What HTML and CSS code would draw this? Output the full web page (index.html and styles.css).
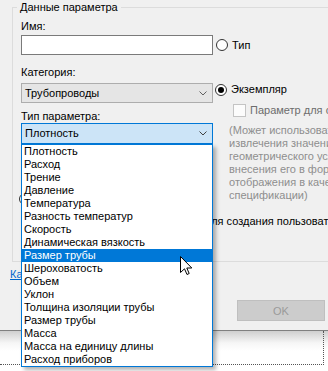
FILE: index.html
```html
<!DOCTYPE html>
<html lang="ru">

<head>
    <meta charset="UTF-8">
    <meta name="viewport" content="width=device-width, initial-scale=1.0">
    <title>Свойства параметра</title>
    <link rel="stylesheet" href="styles.css">
</head>

<body>
    <div class="dialog">
        <fieldset class="group">
            <legend>Данные параметра</legend>

            <div class="field-label">Имя:</div>
            <div class="name-row">
                <input class="textbox" type="text">
                <label class="radio radio-type"><span class="radio-circle"></span>Тип</label>
            </div>

            <div class="field-label cat-label">Категория:</div>
            <div class="main-row">
                <div class="left-col">
                    <div class="combo">
                        <span>Трубопроводы</span>
                        <svg class="chevron" width="8" height="5" viewBox="0 0 8 5"><polyline points="0.5,0.5 4,4 7.5,0.5" fill="none" stroke="#606060" stroke-width="1"/></svg>
                    </div>
                    <div class="field-label type-label">Тип параметра:</div>
                    <div class="combo combo-focus">
                        <span>Плотность</span>
                        <svg class="chevron" width="8" height="5" viewBox="0 0 8 5"><polyline points="0.5,0.5 4,4 7.5,0.5" fill="none" stroke="#404040" stroke-width="1"/></svg>
                    </div>
                    <label class="radio group-radio"><span class="radio-circle"></span>Общий</label>
                </div>
                <div class="right-col">
                    <label class="radio"><span class="radio-circle checked"></span>Экземпляр</label>
                    <label class="check-row"><span class="checkbox"></span>Параметр для отчетов</label>
                    <div class="note">
                        (Может использоваться для<br>
                        извлечения значения из<br>
                        геометрического условия и<br>
                        внесения его в формулу или для<br>
                        отображения в качестве параметра<br>
                        спецификации)
                    </div>
                </div>
            </div>

            <label class="extra-row"><span class="checkbox plain"></span>Использовать текущее значение для создания пользовательских параметров</label>
        </fieldset>

        <div class="link-row"><a href="#">Как работают параметры проекта?</a></div>

        <div class="button-row">
            <button class="ok-btn" disabled>OK</button>
        </div>
    </div>

    <div class="below">
        <div class="focus-rect"></div>
    </div>

    <!-- раскрытый список "Тип параметра" -->
    <ul class="dropdown">
        <li>Плотность</li>
        <li>Расход</li>
        <li>Трение</li>
        <li>Давление</li>
        <li>Температура</li>
        <li>Разность температур</li>
        <li>Скорость</li>
        <li>Динамическая вязкость</li>
        <li class="selected">Размер трубы</li>
        <li>Шероховатость</li>
        <li>Объем</li>
        <li>Уклон</li>
        <li>Толщина изоляции трубы</li>
        <li>Размер трубы</li>
        <li>Масса</li>
        <li>Масса на единицу длины</li>
        <li>Расход приборов</li>
    </ul>

    <svg class="cursor" width="13" height="20" viewBox="0 0 13 20">
        <path d="M0.5 0.5 L0.5 16.5 L4.5 12.8 L7 18.5 L9.2 17.5 L6.8 12 L11.8 12 Z" fill="#fff" stroke="#000" stroke-width="1" stroke-linejoin="miter"/>
    </svg>
</body>

</html>
```

FILE: styles.css
```css
body {
    margin: 0;
    width: 328px;
    height: 371px;
    overflow: hidden;
    position: relative;
    background-color: #f0f0f0;
    font-family: "Liberation Sans", Arial, sans-serif;
    font-size: 11px;
    line-height: 13px;
    color: #000;
}

.dialog {
    height: 330px;
    border-bottom: 1px solid #808080;
    overflow: hidden;
}

.group {
    margin: 1px 0 0 12px;
    padding: 6px 0 0 8px;
    border: 1px solid #dcdcdc;
    width: 400px;
    height: 261px;
    box-sizing: border-box;
    min-inline-size: 0;
}

.group legend {
    margin-left: -4px;
    padding: 0 3px;
    line-height: 13px;
}

.field-label {
    height: 13px;
    white-space: nowrap;
}

.name-row {
    display: flex;
    align-items: center;
    margin-top: 2px;
}

.textbox {
    width: 192px;
    height: 20px;
    margin: 0;
    padding: 0;
    box-sizing: border-box;
    border: 1px solid #7a7a7a;
    background-color: #fff;
    flex: none;
}

.radio {
    display: flex;
    align-items: center;
    gap: 4px;
    white-space: nowrap;
    height: 13px;
}

.radio-type {
    margin-left: 3px;
}

.radio-circle {
    width: 12px;
    height: 12px;
    box-sizing: border-box;
    border: 1px solid #333;
    border-radius: 50%;
    background-color: #fff;
    flex: none;
    display: flex;
    align-items: center;
    justify-content: center;
}

.radio-circle.checked::after {
    content: "";
    width: 6px;
    height: 6px;
    border-radius: 50%;
    background-color: #000;
}

.cat-label {
    margin-top: 11px;
}

.main-row {
    display: flex;
    align-items: flex-start;
    margin-top: 4px;
}

.left-col {
    width: 192px;
    flex: none;
}

.combo {
    height: 20px;
    box-sizing: border-box;
    border: 1px solid #adadad;
    background-color: #e5e5e5;
    display: flex;
    align-items: center;
    justify-content: space-between;
    padding: 0 5px 0 3px;
}

.combo-focus {
    height: 21px;
    border-color: #0078d7;
    background-color: #cce4f7;
}

.chevron {
    flex: none;
}

.type-label {
    margin-top: 7px;
}

.group-radio {
    margin: 48px 0 0 -2px;
}

.right-col {
    margin-left: 2px;
    white-space: nowrap;
}

.check-row {
    display: flex;
    align-items: center;
    gap: 4px;
    margin: 8px 0 0 18px;
    color: #6d6d6d;
}

.checkbox {
    width: 13px;
    height: 13px;
    box-sizing: border-box;
    border: 1px solid #c4c4c4;
    background-color: #fcfcfc;
    flex: none;
}

.checkbox.plain {
    border-color: #333;
    background-color: #fff;
}

.note {
    margin: 7px 0 0 14px;
    line-height: 13px;
    color: #8e8e8e;
}

.extra-row {
    display: flex;
    align-items: center;
    gap: 1px;
    margin-top: 10px;
    white-space: nowrap;
}

.link-row {
    margin-top: 6px;
    padding-left: 10px;
    white-space: nowrap;
}

.link-row a {
    color: #0066cc;
}

.button-row {
    display: flex;
    justify-content: flex-end;
    margin-top: 19px;
    padding-right: 3px;
}

.ok-btn {
    width: 88px;
    height: 21px;
    margin: 0;
    padding: 0;
    border: 1px solid #bfbfbf;
    background-color: #cccccc;
    color: #9a9a9a;
    font-family: "Liberation Sans", Arial, sans-serif;
    font-size: 11px;
}

.below {
    height: 40px;
    background: linear-gradient(#cfcfcf, #f6f6f6 12px, #fff 20px);
}

.focus-rect {
    width: 324px;
    height: 34px;
    box-sizing: border-box;
    border-right: 1px dotted #555;
    border-bottom: 1px dotted #555;
}

.dropdown {
    position: absolute;
    left: 21px;
    top: 144px;
    width: 192px;
    box-sizing: border-box;
    margin: 0;
    padding: 0;
    list-style: none;
    border: 1px solid #0078d7;
    background-color: #fff;
    box-shadow: 3px 3px 4px rgba(0, 0, 0, 0.3);
}

.dropdown li {
    height: 13px;
    padding-left: 2px;
    white-space: nowrap;
}

.dropdown li.selected {
    background-color: #0078d7;
    color: #fff;
}

.cursor {
    position: absolute;
    left: 180px;
    top: 256px;
}
```
